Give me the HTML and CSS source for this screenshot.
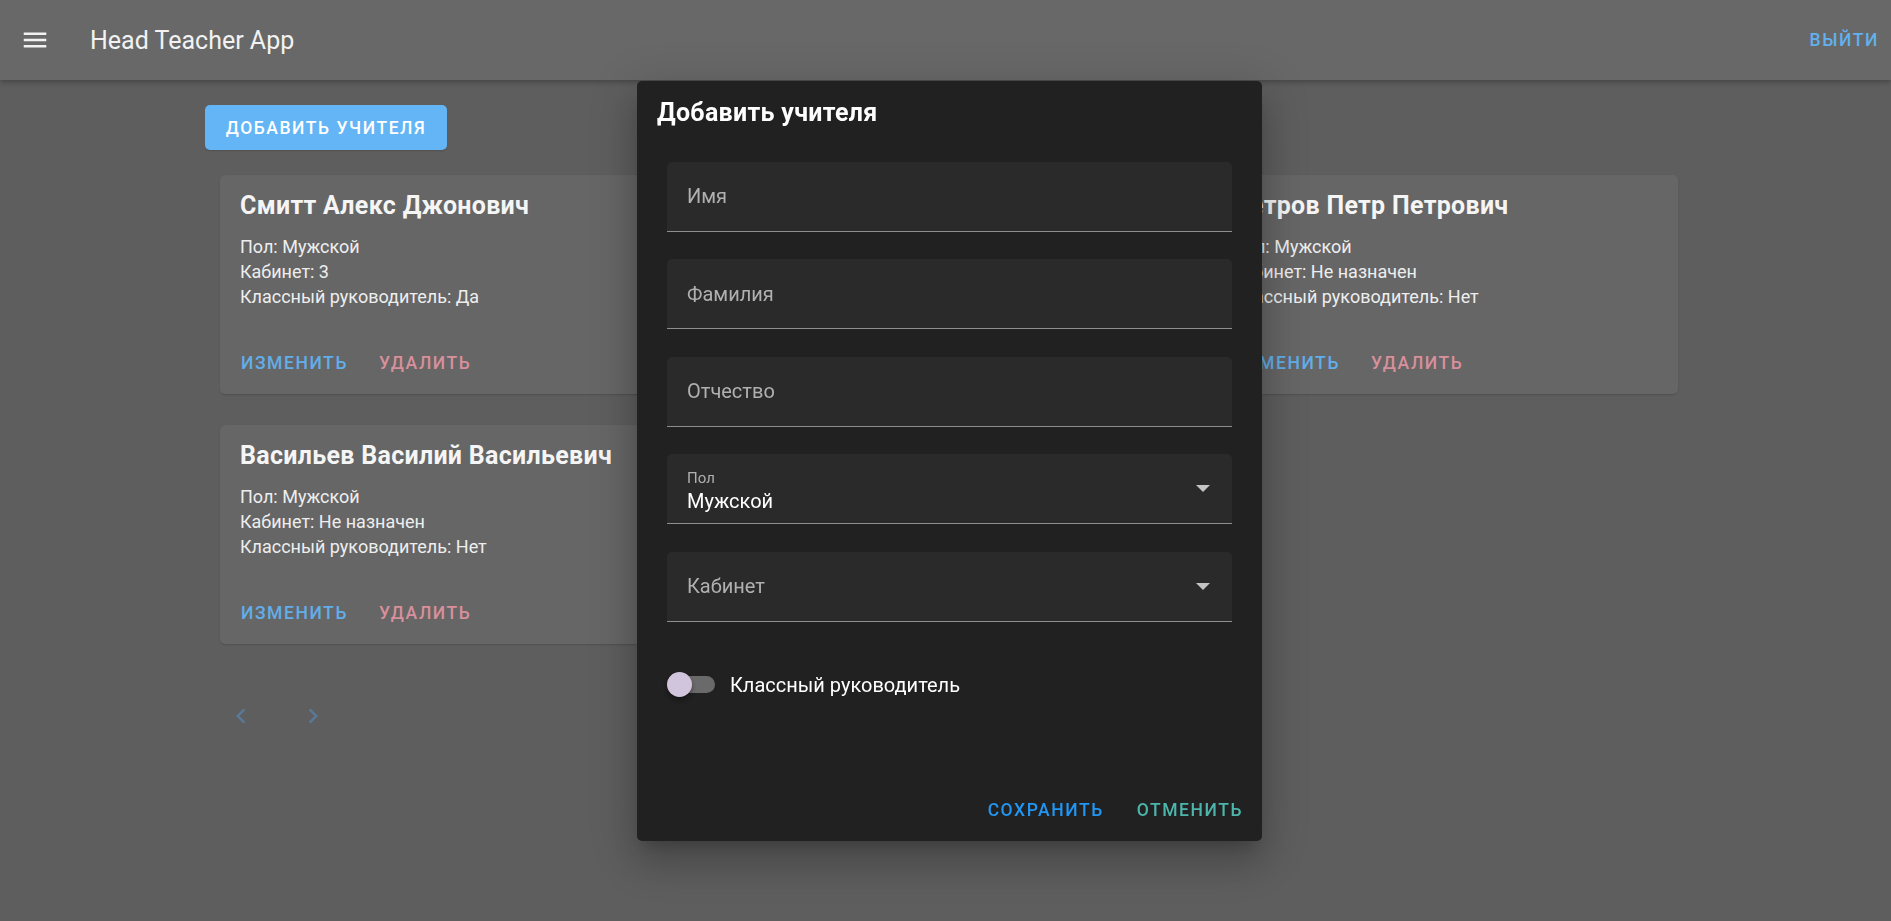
FILE: index.html
```html
<!DOCTYPE html>
<html lang="ru">
<head>
<meta charset="utf-8">
<title>Head Teacher App</title>
<link rel="stylesheet" href="styles.css">
</head>
<body>
<header class="app-bar">
  <button class="menu-btn" aria-label="Меню">
    <svg viewBox="0 0 24 24" width="30" height="30"><path fill="currentColor" d="M3,6H21V8H3V6M3,11H21V13H3V11M3,16H21V18H3V16Z"/></svg>
  </button>
  <div class="app-title">Head Teacher App</div>
  <div class="spacer"></div>
  <a class="logout">Выйти</a>
</header>

<main class="container">
  <button class="add-btn">Добавить учителя</button>
  <div class="cards">
    <div class="card">
      <div class="card-title">Смитт Алекс Джонович</div>
      <div class="card-text">
        <div>Пол: Мужской</div>
        <div>Кабинет: 3</div>
        <div>Классный руководитель: Да</div>
      </div>
      <div class="card-actions">
        <span class="act act-edit">Изменить</span>
        <span class="act act-del">Удалить</span>
      </div>
    </div>
    <div class="card card-hidden">
      <div class="card-title">Иванов Иван Иванович</div>
      <div class="card-text">
        <div>Пол: Мужской</div>
        <div>Кабинет: 5</div>
        <div>Классный руководитель: Нет</div>
      </div>
      <div class="card-actions">
        <span class="act act-edit">Изменить</span>
        <span class="act act-del">Удалить</span>
      </div>
    </div>
    <div class="card">
      <div class="card-title">Петров Петр Петрович</div>
      <div class="card-text">
        <div>Пол: Мужской</div>
        <div>Кабинет: Не назначен</div>
        <div>Классный руководитель: Нет</div>
      </div>
      <div class="card-actions">
        <span class="act act-edit">Изменить</span>
        <span class="act act-del">Удалить</span>
      </div>
    </div>
    <div class="card">
      <div class="card-title">Васильев Василий Васильевич</div>
      <div class="card-text">
        <div>Пол: Мужской</div>
        <div>Кабинет: Не назначен</div>
        <div>Классный руководитель: Нет</div>
      </div>
      <div class="card-actions">
        <span class="act act-edit">Изменить</span>
        <span class="act act-del">Удалить</span>
      </div>
    </div>
  </div>
  <div class="pager">
    <svg viewBox="0 0 24 24" width="30" height="30"><path fill="currentColor" d="M15.41,16.58L10.83,12L15.41,7.41L14,6L8,12L14,18L15.41,16.58Z"/></svg>
    <svg viewBox="0 0 24 24" width="30" height="30"><path fill="currentColor" d="M8.59,16.58L13.17,12L8.59,7.41L10,6L16,12L10,18L8.59,16.58Z"/></svg>
  </div>
</main>

<div class="overlay">
  <div class="dialog">
    <div class="dialog-title">Добавить учителя</div>
    <div class="form">
      <div class="field"><span class="label">Имя</span></div>
      <div class="field"><span class="label">Фамилия</span></div>
      <div class="field"><span class="label">Отчество</span></div>
      <div class="field field-select">
        <div class="select-inner">
          <span class="small-label">Пол</span>
          <span class="value">Мужской</span>
        </div>
        <span class="caret"></span>
      </div>
      <div class="field field-select">
        <span class="label">Кабинет</span>
        <span class="caret"></span>
      </div>
      <div class="switch-row">
        <span class="switch"><span class="track"></span><span class="thumb"></span></span>
        <span class="switch-label">Классный руководитель</span>
      </div>
    </div>
    <div class="dialog-actions">
      <span class="dact save">Сохранить</span>
      <span class="dact cancel">Отменить</span>
    </div>
  </div>
</div>
</body>
</html>
```

FILE: styles.css
```css
* { box-sizing: border-box; }
html, body {
  margin: 0;
  padding: 0;
  height: 100%;
}
body {
  background: #5e5e5e;
  font-family: Roboto, "Noto Sans", "Liberation Sans", sans-serif;
  color: #f2f2f2;
  overflow: hidden;
}

.app-bar {
  height: 80px;
  background: #686868;
  display: flex;
  align-items: center;
  padding: 0 12px 0 20px;
  box-shadow: 0 2px 4px -1px rgba(0,0,0,.2), 0 4px 5px 0 rgba(0,0,0,.1);
  position: relative;
  z-index: 1;
}
.menu-btn {
  background: none;
  border: 0;
  padding: 0;
  width: 30px;
  height: 30px;
  color: #f2f2f2;
  display: flex;
}
.app-title {
  margin-left: 40px;
  font-size: 25px;
  font-weight: 400;
  color: #f2f2f2;
}
.spacer { flex: 1; }
.logout {
  font-size: 17.5px;
  font-weight: 500;
  letter-spacing: 1.56px;
  text-transform: uppercase;
  color: #62b0ee;
}

.container {
  padding: 25px 0 0 205px;
}
.add-btn {
  display: block;
  height: 45px;
  width: 242px;
  border: 0;
  border-radius: 5px;
  background: #64b5f6;
  color: #fff;
  font-family: Roboto, "Noto Sans", sans-serif;
  font-size: 17.5px;
  font-weight: 500;
  letter-spacing: 1.56px;
  text-transform: uppercase;
  padding: 0;
  box-shadow: 0 2px 2px -1px rgba(0,0,0,.15);
}
.cards {
  margin: 25px 0 0 15px;
  display: grid;
  grid-template-columns: repeat(3, 466px);
  column-gap: 30px;
  row-gap: 31px;
}
.card {
  height: 219px;
  background: #666666;
  border-radius: 5px;
  display: flex;
  flex-direction: column;
  box-shadow: 0 2px 1px -1px rgba(0,0,0,.08), 0 1px 3px 0 rgba(0,0,0,.08);
}
.card-hidden { visibility: hidden; }
.card-title {
  padding: 16px 20px 0;
  font-size: 25px;
  line-height: 30px;
  font-weight: 700;
  letter-spacing: 0.3px;
  color: #f5f5f5;
  white-space: nowrap;
}
.card-text {
  padding: 13px 20px 0;
  font-size: 18px;
  line-height: 25px;
  color: #eeeeee;
}
.card-actions {
  margin-top: auto;
  margin-bottom: 8.5px;
  height: 45px;
  display: flex;
  align-items: center;
  gap: 31px;
  padding: 0 21px;
}
.act {
  font-size: 17.5px;
  font-weight: 500;
  letter-spacing: 1.56px;
  text-transform: uppercase;
}
.act-edit { color: #62aeea; }
.act-del { color: #d8909c; }

.pager {
  display: flex;
  gap: 42px;
  margin: 57px 0 0 21px;
  color: #5a7898;
}

.overlay {
  position: fixed;
  inset: 0;
  display: flex;
  align-items: center;
  justify-content: center;
  padding-left: 8px;
  z-index: 5;
}
.dialog {
  width: 625px;
  height: 760px;
  background: #212121;
  border-radius: 5px;
  display: flex;
  flex-direction: column;
  box-shadow: 0 11px 15px -7px rgba(0,0,0,.2), 0 24px 38px 3px rgba(0,0,0,.14), 0 9px 46px 8px rgba(0,0,0,.12);
}
.dialog-title {
  padding: 12px 20px 0;
  font-size: 25px;
  line-height: 40px;
  font-weight: 700;
  letter-spacing: 0.3px;
  color: #ffffff;
}
.form {
  padding: 29px 30px 0 30px;
}
.field {
  height: 70px;
  background: #2a2a2a;
  border-radius: 5px 5px 0 0;
  border-bottom: 1px solid #8e8e8e;
  display: flex;
  align-items: center;
  padding: 0 20px;
  margin-bottom: 27.5px;
}
.label {
  font-size: 20px;
  color: #b0b0b0;
}
.field-select {
  justify-content: space-between;
  padding-right: 22px;
  margin-bottom: 0;
}
.form .field:nth-child(4) { margin-bottom: 27.5px; }
.select-inner {
  display: flex;
  flex-direction: column;
  padding-top: 6px;
}
.small-label {
  font-size: 15px;
  line-height: 18px;
  color: #b0b0b0;
}
.value {
  font-size: 20px;
  line-height: 28px;
  color: #ffffff;
}
.caret {
  width: 0;
  height: 0;
  border-left: 7px solid transparent;
  border-right: 7px solid transparent;
  border-top: 7px solid #c4c4c4;
}
.switch-row {
  display: flex;
  align-items: center;
  height: 25px;
  margin-top: 50.5px;
}
.switch {
  position: relative;
  width: 48px;
  height: 25px;
  margin-right: 15px;
}
.track {
  position: absolute;
  left: 3px;
  top: 4px;
  width: 45px;
  height: 17px;
  border-radius: 9px;
  background: #6a6a6a;
}
.thumb {
  position: absolute;
  left: 0;
  top: 0;
  width: 25px;
  height: 25px;
  border-radius: 50%;
  background: #d1c4dd;
  box-shadow: 0 2px 4px -1px rgba(0,0,0,.3), 0 4px 5px 0 rgba(0,0,0,.2);
}
.switch-label {
  font-size: 20px;
  color: #ffffff;
}
.dialog-actions {
  margin-top: auto;
  height: 45px;
  margin-bottom: 8.5px;
  display: flex;
  align-items: center;
  justify-content: flex-end;
  gap: 33px;
  padding-right: 19px;
}
.dact {
  font-size: 17.5px;
  font-weight: 500;
  letter-spacing: 1.56px;
  text-transform: uppercase;
}
.save { color: #2196f3; }
.cancel { color: #4db6ac; }
```
